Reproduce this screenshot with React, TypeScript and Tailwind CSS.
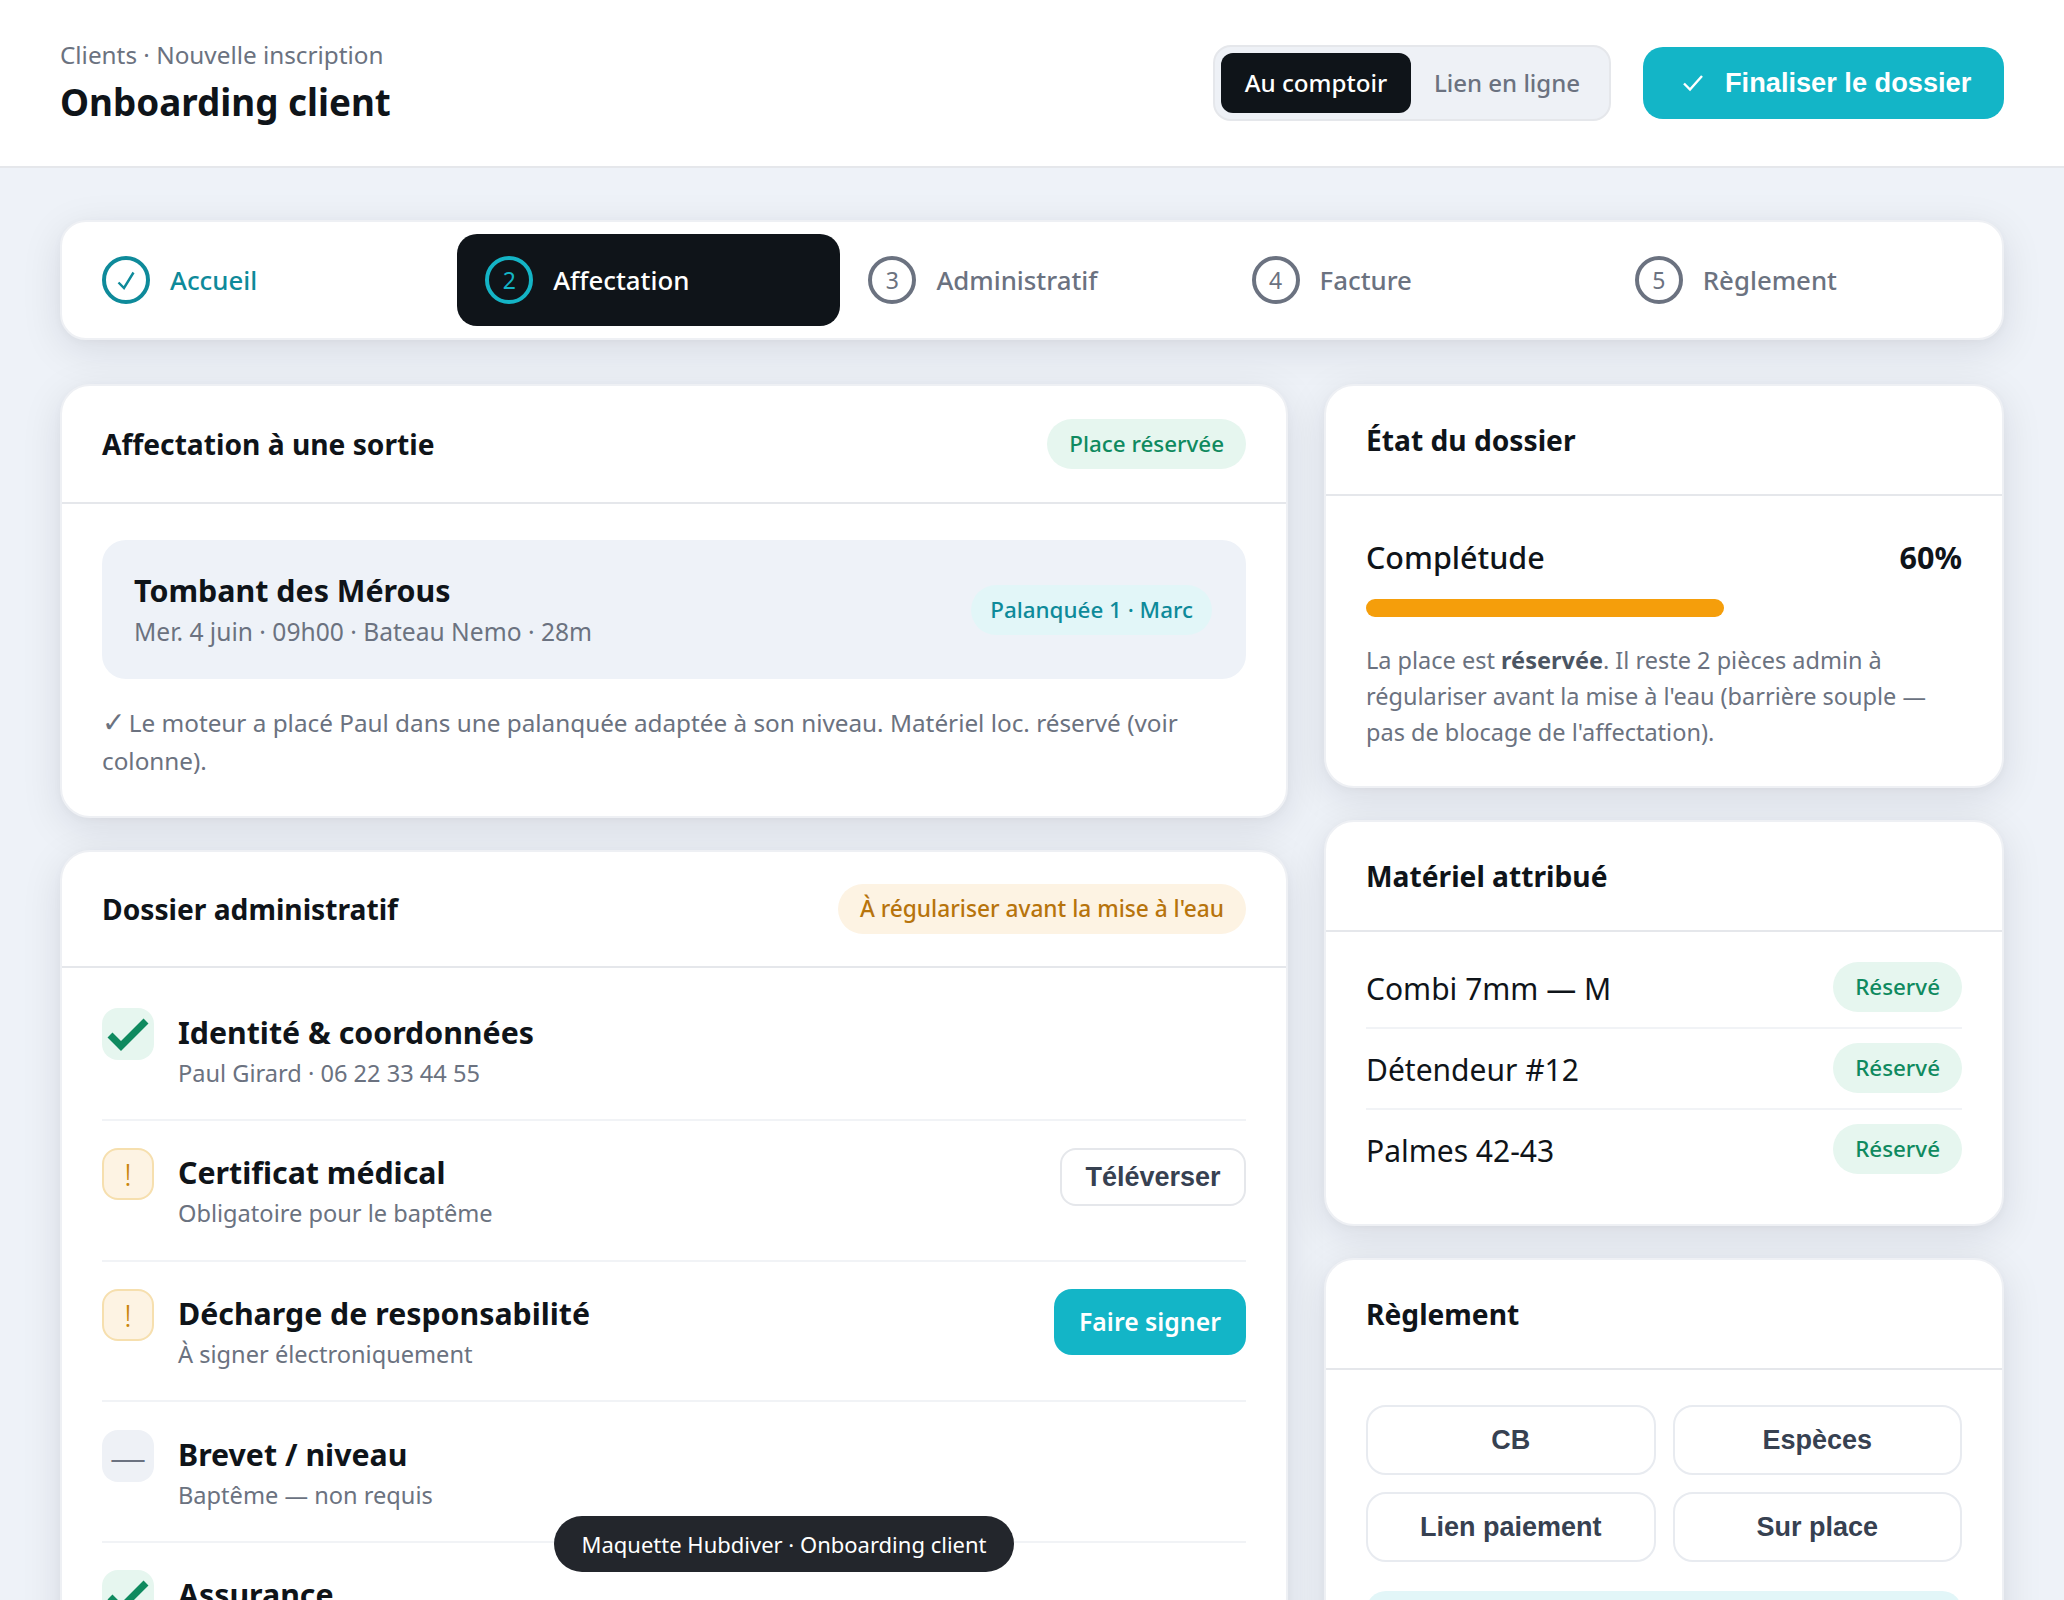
function Pill({ tone, children, className = '' }: { tone: 'green' | 'amber' | 'teal'; children: React.ReactNode; className?: string }) {
  const tones = {
    green: 'bg-[#e6f6ef] text-[#0f8a5f]',
    amber: 'bg-[#fdf3e3] text-[#b7740c]',
    teal: 'bg-[#e2f6f8] text-[#0e8a9a]',
  };
  return (
    <span className={`inline-flex h-[50px] items-center rounded-full text-[22.4px] font-medium whitespace-nowrap ${tones[tone]} ${className || 'px-[22px]'}`}>
      {children}
    </span>
  );
}

const cardShadow = 'shadow-[0_2px_8px_rgba(15,23,42,0.03),0_10px_40px_rgba(15,23,42,0.1)]';

function Card({ title, pill, children, tall }: { title: string; pill?: React.ReactNode; children: React.ReactNode; tall?: boolean }) {
  return (
    <section className={`rounded-[30px] border-2 border-[#eef0f4] bg-white ${cardShadow}`}>
      <div className={`flex items-center justify-between border-b-2 border-[#e5e7eb] px-[40px] ${tall ? 'py-[33px]' : 'py-[32px]'}`}>
        <h2 className="text-[28.2px] leading-[44px] font-bold text-[#0f1419]">{title}</h2>
        {pill}
      </div>
      {children}
    </section>
  );
}

const steps = [
  { n: '', label: 'Accueil', state: 'done' },
  { n: '2', label: 'Affectation', state: 'active' },
  { n: '3', label: 'Administratif', state: 'todo' },
  { n: '4', label: 'Facture', state: 'todo' },
  { n: '5', label: 'Règlement', state: 'todo' },
];

function Stepper() {
  return (
    <div className={`mb-[44px] flex rounded-[26px] border-2 border-[#eef0f4] bg-white p-[12px] ${cardShadow}`}>
      {steps.map((s) => (
        <div
          key={s.label}
          className={`flex h-[92px] flex-1 items-center gap-[20px] rounded-[20px] px-[28px] ${s.state === 'active' ? 'bg-[#0f1419]' : ''}`}
        >
          <span
            className={`flex h-[48px] w-[48px] shrink-0 items-center justify-center rounded-full border-4 text-[23px] ${
              s.state === 'done'
                ? 'border-[#0e8a9a] text-[#0e8a9a]'
                : s.state === 'active'
                  ? 'border-[#14b4c6] text-[#14b4c6]'
                  : 'border-[#6b7280] text-[#6b7280]'
            }`}
          >
            {s.state === 'done' ? (
              <svg width="18" height="19" viewBox="0 0 18 19" fill="none" stroke="currentColor" strokeWidth="2.4">
                <path d="M1.5 11.5 L7 17 L16.5 1.5" />
              </svg>
            ) : (
              s.n
            )}
          </span>
          <span
            className={`pt-[1px] text-[25.8px] font-medium ${
              s.state === 'done' ? 'text-[#0e8a9a]' : s.state === 'active' ? 'text-white' : 'text-[#6b7280]'
            }`}
          >
            {s.label}
          </span>
        </div>
      ))}
    </div>
  );
}

function DocIcon({ kind }: { kind: 'ok' | 'warn' | 'none' }) {
  if (kind === 'ok')
    return (
      <span className="flex h-[52px] w-[52px] shrink-0 items-center justify-center rounded-[16px] bg-[#e6f6ef]">
        <svg width="52" height="52" viewBox="0 0 52 52" fill="none" stroke="#0f8a5f" strokeWidth="7">
          <path d="M8 27 L19 38 L44 13" />
        </svg>
      </span>
    );
  if (kind === 'warn')
    return (
      <span className="flex h-[52px] w-[52px] shrink-0 items-center justify-center rounded-[16px] border-2 border-[#f6dfae] bg-[#fdf3e3] text-[32px] leading-none font-light text-[#c9840c]">
        !
      </span>
    );
  return (
    <span className="flex h-[52px] w-[52px] shrink-0 items-center justify-center rounded-[16px] bg-[#eef1f6] pt-[4px] text-[36px] leading-none font-light text-[#6b7280]">
      —
    </span>
  );
}

function DocRow({ kind, title, sub, action, last }: { kind: 'ok' | 'warn' | 'none'; title: string; sub?: string; action?: React.ReactNode; last?: boolean }) {
  return (
    <div className={`flex items-start gap-[24px] py-[27.3px] ${last ? '' : 'border-b-2 border-[#f1f3f6]'}`}>
      <DocIcon kind={kind} />
      <div className="min-w-0 flex-1 pt-[3px]">
        <div className="text-[30.3px] leading-[44px] font-bold text-[#0f1419]">{title}</div>
        {sub && <div className="text-[23.6px] leading-[37px] text-[#6b7280]">{sub}</div>}
      </div>
      {action}
    </div>
  );
}

function GearRow({ label, last }: { label: string; last?: boolean }) {
  return (
    <div className={`flex items-center justify-between pt-[14px] pb-[15px] ${last ? '' : 'border-b-2 border-[#f1f3f6]'}`}>
      <span className="pt-[2px] text-[30px] text-[#0f1419]">{label}</span>
      <Pill tone="green">Réservé</Pill>
    </div>
  );
}

function PayButton({ label }: { label: string }) {
  return (
    <button className="h-[70px] rounded-[20px] border-2 border-[#e8ebf0] bg-white font-['Liberation_Sans',sans-serif] text-[27px] font-bold text-[#374151]">
      {label}
    </button>
  );
}

export default function App() {
  return (
    <div className="relative h-[1600px] overflow-hidden bg-[#eef2f8] font-['Noto_Sans',sans-serif]">
      <header className="flex h-[168px] items-center justify-between border-b-2 border-[#e5e7eb] bg-white px-[60px]">
        <div>
          <div className="text-[24.3px] leading-[38px] text-[#6b7280]">Clients · Nouvelle inscription</div>
          <h1 className="text-[36.8px] leading-[56px] font-bold text-[#0f1419]">Onboarding client</h1>
        </div>
        <div className="flex items-center gap-[32px]">
          <div className="flex rounded-[18px] border-2 border-[#e5e7eb] bg-[#eef1f6] p-[6px]">
            <span className="flex h-[60px] w-[190px] items-center justify-center rounded-[12px] bg-[#0f1419] text-[24.2px] font-medium text-white">Au comptoir</span>
            <span className="flex h-[60px] w-[192px] items-center justify-center text-[24px] font-medium text-[#6b7280]">Lien en ligne</span>
          </div>
          <button className="flex h-[72px] w-[361px] items-center gap-[21px] rounded-[20px] bg-[#13b5c7] pl-[39px] font-['Liberation_Sans',sans-serif] text-[27.2px] font-bold text-white">
            <svg width="22" height="18" viewBox="0 0 22 18" fill="none" stroke="currentColor" strokeWidth="2.4">
              <path d="M2 9.5 L8 15.5 L20 2" />
            </svg>
            Finaliser le dossier
          </button>
        </div>
      </header>

      <main className="px-[60px] pt-[52px]">
        <Stepper />
        <div className="grid grid-cols-[1228px_680px] gap-[36px]">
          <div className="flex flex-col gap-[32px]">
            <Card title="Affectation à une sortie" pill={<Pill tone="green">Place réservée</Pill>} tall>
              <div className="px-[40px] pt-[36px] pb-[35.6px]">
                <div className="flex h-[139px] items-center justify-between rounded-[24px] bg-[#eef2f8] pr-[34px] pl-[32px]">
                  <div>
                    <div className="text-[30.4px] leading-[44px] font-bold text-[#0f1419]">Tombant des Mérous</div>
                    <div className="text-[24.6px] leading-[38px] text-[#6b7280]">Mer. 4 juin · 09h00 · Bateau Nemo · 28m</div>
                  </div>
                  <Pill tone="teal" className="px-[19px]">Palanquée 1 · Marc</Pill>
                </div>
                <p className="mt-[25px] text-[24.3px] leading-[38px] text-[#6b7280]">
                  <span className="inline-block w-[20.4px] font-['DejaVu_Sans',sans-serif] text-[28px] leading-none">✓</span> Le moteur a placé Paul dans une palanquée adaptée à son niveau. Matériel loc. réservé (voir colonne).
                </p>
              </div>
            </Card>
            <Card title="Dossier administratif" pill={<Pill tone="amber" className="px-[22px] text-[22.7px]">À régulariser avant la mise à l'eau</Pill>}>
              <div className="px-[40px] pt-[13px]">
                <DocRow kind="ok" title="Identité & coordonnées" sub="Paul Girard · 06 22 33 44 55" />
                <DocRow
                  kind="warn"
                  title="Certificat médical"
                  sub="Obligatoire pour le baptême"
                  action={
                    <button className="h-[58px] w-[186px] rounded-[16px] border-2 border-[#e5e7eb] bg-white font-['Liberation_Sans',sans-serif] text-[27px] font-bold text-[#374151]">
                      Téléverser
                    </button>
                  }
                />
                <DocRow
                  kind="warn"
                  title="Décharge de responsabilité"
                  sub="À signer électroniquement"
                  action={<button className="h-[66px] w-[192px] rounded-[18px] bg-[#13b5c7] text-[24.8px] font-semibold text-white">Faire signer</button>}
                />
                <DocRow kind="none" title="Brevet / niveau" sub="Baptême — non requis" />
                <DocRow kind="ok" title="Assurance" last />
              </div>
            </Card>
          </div>

          <div className="flex flex-col gap-[32px]">
            <Card title="État du dossier">
              <div className="px-[40px] pt-[39px] pb-[36px]">
                <div className="flex items-center justify-between text-[30.5px] leading-[44px] font-medium text-[#0f1419]">
                  <span>Complétude</span>
                  <span className="font-bold">60%</span>
                </div>
                <div className="mt-[20px] h-[18px] w-[358px] rounded-full bg-[#f59e0b]" />
                <p className="mt-[25px] text-[23.5px] leading-[36px] text-[#6b7280]">
                  La place est <b className="font-bold text-[#4b5563]">réservée</b>. Il reste 2 pièces admin à régulariser avant la mise à l'eau (barrière souple — pas de blocage de l'affectation).
                </p>
              </div>
            </Card>
            <Card title="Matériel attribué">
              <div className="px-[40px] pt-[16px] pb-[35px]">
                <GearRow label="Combi 7mm — M" />
                <GearRow label="Détendeur #12" />
                <GearRow label="Palmes 42-43" last />
              </div>
            </Card>
            <Card title="Règlement">
              <div className="px-[40px] pt-[35px]">
                <div className="grid grid-cols-2 gap-[17px]">
                  <PayButton label="CB" />
                  <PayButton label="Espèces" />
                  <PayButton label="Lien paiement" />
                  <PayButton label="Sur place" />
                </div>
                <div className="mt-[29px] h-[90px] rounded-[20px] bg-[#e2f6f8]" />
              </div>
            </Card>
          </div>
        </div>
      </main>

      <div className="absolute top-[1516px] left-[554px] flex h-[56px] w-[460px] items-center justify-center rounded-full bg-[#23262c] text-[22px] text-white">
        Maquette Hubdiver · Onboarding client
      </div>
    </div>
  );
}
